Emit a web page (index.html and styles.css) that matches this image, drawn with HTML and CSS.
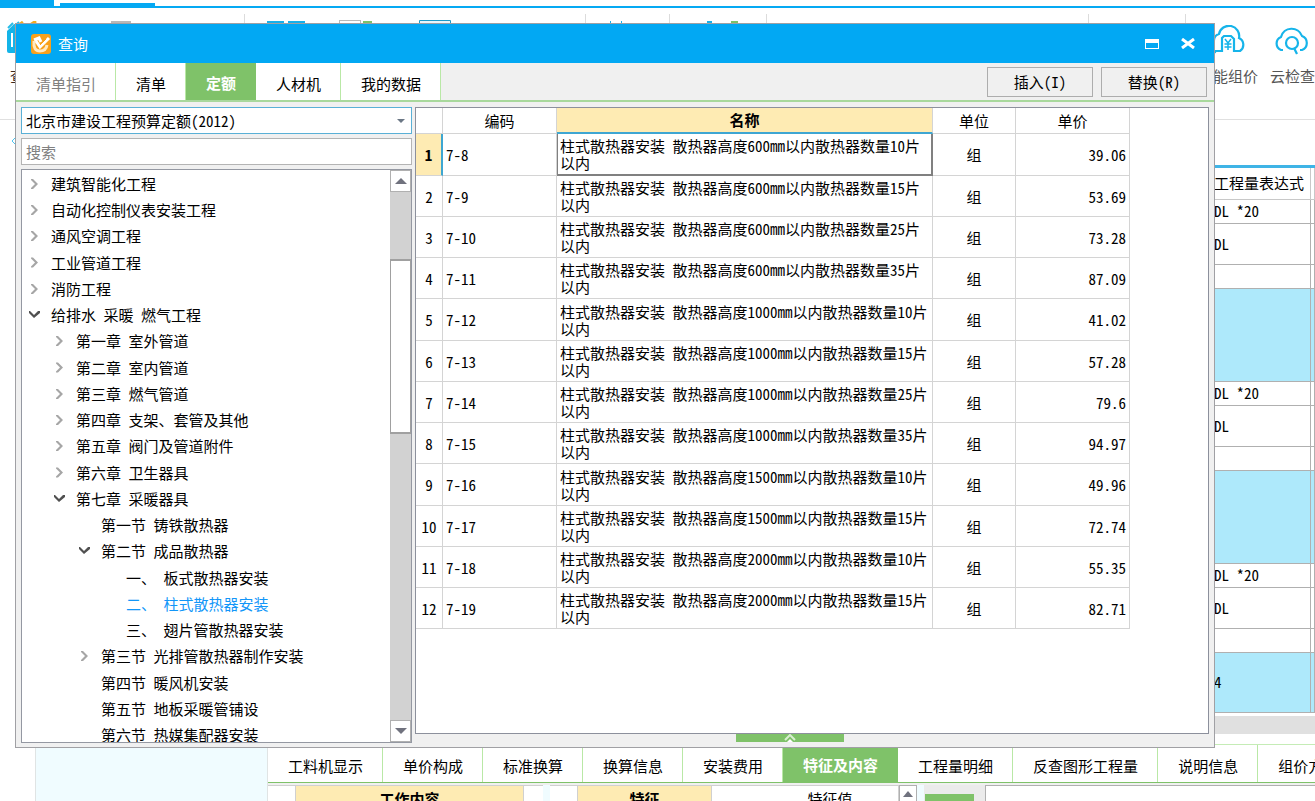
FILE: index.html
```html
<!DOCTYPE html>
<html lang="zh-CN">
<head>
<meta charset="utf-8">
<title>查询</title>
<link rel="stylesheet" href="styles.css">
</head>
<body>
<div class="app">
  <div class="strip"><span class="strip-a"></span><span class="strip-b"></span></div>
  <header class="ribbon">
    <button class="tool tool-first">
      <svg width="36" height="36" viewBox="0 0 36 36"><path d="M2 10 9 3h25v29H4q-2 0-2-2z" fill="#14b4e8"/><path d="M1 9 9 1l3 3" fill="none" stroke="#fff" stroke-width="2"/><path d="M3 7 8 2M9 6l5-5" stroke="#27bce8" stroke-width="2"/><path d="M14 4l4-3M25 4l6-4" stroke="#f3ab1e" stroke-width="3"/><path d="M7 12v14" stroke="#fff" stroke-width="2"/></svg>
      <span>查询</span>
    </button>
    <svg class="ribbon-art" width="1150" height="20" viewBox="0 0 1150 20"><g fill="#dcdcdc"><path d="M204 6h1v14h-1zM545 6h1v14h-1zM629 6h1v14h-1zM726 6h1v14h-1zM1048 6h1v14h-1zM1145 6h1v14h-1z"/></g><path d="M71 13h20v7H71zM299 12h22v8h-22z" fill="#b9b9b9"/><path d="M300 13h20v7h-20z" fill="#fff"/><path d="M227 13h17v7h-17zM248 13h17v7h-17zM570 13h1v7h-1zM581 13h1v7h-1zM667 13h5v7h-5z" fill="#16b0ea"/><path d="M323 13h9v7h-9zM691 13h7v7h-7z" fill="#7fc269"/><path d="M379.500 12.500h31v7h-31z" fill="#e8f6fc" stroke="#1c9ac8"/></svg>
    <div class="cloud-tools">
      <button class="tool">
        <svg width="38" height="32" viewBox="0 0 38 32" fill="none" stroke="#16b4ea" stroke-width="2.200"><path d="M7 27a6 6 0 0 1-2-12 7 7 0 0 1 5-6 10 10 0 0 1 20 4 7.500 7.500 0 0 1 1 13h-6V14l-3-3h-7l-2 2v13H6"/><path d="M16 14l3 4 3-4M19 18v7M15.500 19h7M15.500 22h7" stroke-width="1.500"/></svg>
        <span>智能组价</span>
      </button>
      <button class="tool">
        <svg width="40" height="32" viewBox="0 0 40 32" fill="none" stroke="#16b4ea" stroke-width="2.200"><path d="M11 25H9a7 7 0 0 1 0-13A11 11 0 0 1 30 11a7.500 7.500 0 0 1 0 14h-2"/><circle cx="20" cy="18" r="6"/><path d="M22 23l3 6"/></svg>
        <span>云检查</span>
      </button>
    </div>
  </header>
  <div class="subbar"><svg width="8" height="12" viewBox="0 0 8 12"><path d="M6 2 2 6l4 4" fill="none" stroke="#4cc4f0"/></svg></div>
  <div class="sheet-wrap">
    <table class="sheet">
      <colgroup><col><col class="c-expr"><col class="c-rest"></colgroup>
      <thead><tr><th></th><th>工程量表达式</th><th></th></tr></thead>
      <tbody>
        <tr class="short"><td></td><td>DL *20</td><td></td></tr>
        <tr class="mid"><td></td><td>DL</td><td></td></tr>
        <tr class="short"><td></td><td></td><td></td></tr>
        <tr class="tall"><td></td><td></td><td></td></tr>
        <tr class="short"><td></td><td>DL *20</td><td></td></tr>
        <tr class="mid"><td></td><td>DL</td><td></td></tr>
        <tr class="short"><td></td><td></td><td></td></tr>
        <tr class="tall"><td></td><td></td><td></td></tr>
        <tr class="short"><td></td><td>DL *20</td><td></td></tr>
        <tr class="mid"><td></td><td>DL</td><td></td></tr>
        <tr class="short"><td></td><td></td><td></td></tr>
        <tr class="last"><td></td><td>4</td><td></td></tr>
      </tbody>
    </table>
  </div>
  <div class="hscroll"></div>
  <div class="lower">
    <div class="lower-side"></div>
    <div class="lower-main">
      <nav class="tabs lower-tabs">
        <button>工料机显示</button><button>单价构成</button><button>标准换算</button><button>换算信息</button><button>安装费用</button><button class="on">特征及内容</button><button>工程量明细</button><button>反查图形工程量</button><button>说明信息</button><button>组价方案</button>
      </nav>
      <div class="heads">
        <div class="head head-no"></div>
        <div class="head head-work hl">工作内容</div>
        <div class="head head-fill"></div>
        <div class="gap"></div>
        <div class="head head-no"></div>
        <div class="head head-feat hl">特征</div>
        <div class="head head-val">特征值</div>
        <button class="arrow"><svg width="10" height="6"><path d="M0 6 5 0l5 6z"/></svg></button>
        <div class="gap"></div>
        <div class="side-btns"><button></button></div>
        <div class="note"></div>
      </div>
    </div>
  </div>
</div>

<section class="dialog" role="dialog">
  <div class="title">
    <svg width="20" height="20" viewBox="0 0 20 20"><rect width="20" height="20" rx="3" fill="#f9a11b"/><path d="M3 7q-1 10 6 10 6 0 7-6" fill="none" stroke="#ffe9c0" stroke-width="3"/><path d="M3 6l5-2 2 4M5 7l4 6 9-9" fill="none" stroke="#fff" stroke-width="3"/><path d="M9 11l6-6" stroke="#f9a11b"/></svg>
    <h1>查询</h1>
    <button class="win"><svg width="14" height="10"><path d="M0 0h14v10H0zM1 4v5h12V4z" fill="#fff" fill-rule="evenodd"/></svg></button>
    <button class="win"><svg width="14" height="11"><path d="M1 1l12 9M13 1 1 10" stroke="#fff" stroke-width="3"/></svg></button>
  </div>
  <div class="toolbar">
    <nav class="tabs">
      <button class="dim">清单指引</button><button>清单</button><button class="on">定额</button><button>人材机</button><button>我的数据</button>
    </nav>
    <div class="actions"><button>插入(I)</button><button>替换(R)</button></div>
  </div>
  <div class="body">
    <div class="left">
      <div class="combo">
        <select aria-label="定额库"><option>北京市建设工程预算定额(2012)</option></select>
        <svg width="8" height="4"><path d="M0 0h8L4 4z" fill="#6b7785"/></svg>
      </div>
      <input class="search" type="text" placeholder="搜索" aria-label="搜索">
      <div class="tree-box">
        <div class="tree">
          <button class="node shut">建筑智能化工程</button>
          <button class="node shut">自动化控制仪表安装工程</button>
          <button class="node shut">通风空调工程</button>
          <button class="node shut">工业管道工程</button>
          <button class="node shut">消防工程</button>
          <button class="node open">给排水 采暖 燃气工程</button>
          <button class="node l1 shut">第一章 室外管道</button>
          <button class="node l1 shut">第二章 室内管道</button>
          <button class="node l1 shut">第三章 燃气管道</button>
          <button class="node l1 shut">第四章 支架、套管及其他</button>
          <button class="node l1 shut">第五章 阀门及管道附件</button>
          <button class="node l1 shut">第六章 卫生器具</button>
          <button class="node l1 open">第七章 采暖器具</button>
          <button class="node l2">第一节 铸铁散热器</button>
          <button class="node l2 open">第二节 成品散热器</button>
          <button class="node l3">一、 板式散热器安装</button>
          <button class="node l3 picked">二、 柱式散热器安装</button>
          <button class="node l3">三、 翅片管散热器安装</button>
          <button class="node l2 shut">第三节 光排管散热器制作安装</button>
          <button class="node l2">第四节 暖风机安装</button>
          <button class="node l2">第五节 地板采暖管铺设</button>
          <button class="node l2">第六节 热媒集配器安装</button>
        </div>
        <div class="vscroll">
          <button class="arrow"><svg width="12" height="6"><path d="M0 6 6 0l6 6z"/></svg></button>
          <div class="track"><div class="thumb"></div></div>
          <button class="arrow"><svg width="12" height="6"><path d="M0 0h12L6 6z"/></svg></button>
        </div>
      </div>
    </div>
    <div class="right">
      <div class="grid-box">
        <table class="grid">
          <colgroup><col class="g-no"><col class="g-code"><col class="g-name"><col class="g-unit"><col class="g-price"></colgroup>
          <thead><tr><th></th><th>编码</th><th class="hl">名称</th><th>单位</th><th>单价</th></tr></thead>
          <tbody>
            <tr class="cur"><td>1</td><td>7-8</td><td>柱式散热器安装 散热器高度600mm以内散热器数量10片以内</td><td>组</td><td>39.06</td></tr>
            <tr><td>2</td><td>7-9</td><td>柱式散热器安装 散热器高度600mm以内散热器数量15片以内</td><td>组</td><td>53.69</td></tr>
            <tr><td>3</td><td>7-10</td><td>柱式散热器安装 散热器高度600mm以内散热器数量25片以内</td><td>组</td><td>73.28</td></tr>
            <tr><td>4</td><td>7-11</td><td>柱式散热器安装 散热器高度600mm以内散热器数量35片以内</td><td>组</td><td>87.09</td></tr>
            <tr><td>5</td><td>7-12</td><td>柱式散热器安装 散热器高度1000mm以内散热器数量10片以内</td><td>组</td><td>41.02</td></tr>
            <tr><td>6</td><td>7-13</td><td>柱式散热器安装 散热器高度1000mm以内散热器数量15片以内</td><td>组</td><td>57.28</td></tr>
            <tr><td>7</td><td>7-14</td><td>柱式散热器安装 散热器高度1000mm以内散热器数量25片以内</td><td>组</td><td>79.6</td></tr>
            <tr><td>8</td><td>7-15</td><td>柱式散热器安装 散热器高度1000mm以内散热器数量35片以内</td><td>组</td><td>94.97</td></tr>
            <tr><td>9</td><td>7-16</td><td>柱式散热器安装 散热器高度1500mm以内散热器数量10片以内</td><td>组</td><td>49.96</td></tr>
            <tr><td>10</td><td>7-17</td><td>柱式散热器安装 散热器高度1500mm以内散热器数量15片以内</td><td>组</td><td>72.74</td></tr>
            <tr><td>11</td><td>7-18</td><td>柱式散热器安装 散热器高度2000mm以内散热器数量10片以内</td><td>组</td><td>55.35</td></tr>
            <tr><td>12</td><td>7-19</td><td>柱式散热器安装 散热器高度2000mm以内散热器数量15片以内</td><td>组</td><td>82.71</td></tr>
          </tbody>
        </table>
      </div>
      <div class="foot"><button class="expand"><svg width="12" height="8"><path d="M1 6l5-5 5 5" fill="none" stroke="#d9efd2" stroke-width="2"/><path d="M3 8l3-3 3 3z" fill="#fff"/></svg></button></div>
    </div>
  </div>
</section>
</body>
</html>
```
FILE: styles.css
```css
* { box-sizing: border-box; }
body, button, input, select, table {
  font-family: "Noto Sans CJK SC", sans-serif;
  font-size: 15px;
  line-height: 18px;
  font-feature-settings: "hwid";
  color: #000;
}
body { margin: 0; background: #fff; overflow: hidden; }
button { border: 0; padding: 0; background: none; white-space: nowrap; }
svg { display: block; flex: none; }

.app { height: 100vh; display: flex; flex-direction: column; overflow: hidden; }
.strip { display: flex; align-items: flex-end; gap: 6px; height: 8px; flex: none; border-bottom: 2px solid #05a9f3; }
.strip-a { width: 54px; height: 6px; background: #05a9f3; }
.strip-b { width: 95px; height: 3px; background: #05a9f3; }

.ribbon { display: flex; height: 112px; flex: none; border-bottom: 1px solid #e0e0e0; overflow: hidden; }
.tool { display: flex; flex-direction: column; align-items: center; gap: 10px; color: #555; flex: none; }
.tool-first { width: 40px; padding: 13px 0 0 5px; align-self: flex-start; color: #3c2a20; }
.tool-first span { padding-left: 5px; }
.ribbon-art { flex: none; margin-right: -1150px; }
.cloud-tools { display: flex; gap: 12px; align-items: flex-start; margin-left: auto; padding-top: 17px; }

.subbar { height: 45px; flex: none; padding: 15px 0 0 10px; }
.sheet-wrap { flex: 1; margin-left: 35px; overflow: hidden; border-top: 3px solid #3fb4e6; }
.sheet { width: 100%; table-layout: fixed; border-collapse: collapse; }
.c-expr { width: 97px; }
.c-rest { width: 4px; }
.sheet th { height: 31px; font-weight: 400; text-align: left; border-right: 1px solid #c8c8c8; border-bottom: 1px solid #c8c8c8; padding: 0; white-space: nowrap; }
.sheet td { border-right: 1px solid #b0b0b0; border-bottom: 1px solid #b0b0b0; padding: 0; }
.short td { height: 24px; }
.mid td { height: 41px; }
.tall td { height: 93px; background: #aee9fb; }
.last td { height: 60px; background: #aee9fb; }
.hscroll { height: 18px; margin-left: 35px; flex: none; background: #e0e0e0; }

.lower { display: flex; height: 67px; flex: none; padding-top: 10px; }
.lower-side { width: 233px; margin-left: 35px; flex: none; background: #f0fcff; border: 1px solid #e0e4e4; border-width: 0 1px; }
.lower-main { flex: 1; min-width: 0; overflow: hidden; }
.tabs { display: flex; }
.tabs button { padding: 4px 19px 0 20px; background: #fff; border-right: 1px solid #b9e8a6; flex: none; }
.tabs .on { background: #7fc269; color: #fff; font-weight: 700; border-color: #7fc269; padding-top: 2px; }
.tabs .dim { color: #808080; }
.lower-tabs { height: 39px; border-top: 1px solid #c5ecb6; border-bottom: 1px solid #7fc269; }
.heads { display: flex; height: 30px; padding-top: 2px; background: #f0f0f0; }
.head { background: #fff; border: 1px solid #d0d0d0; border-width: 1px 1px 0 0; text-align: center; padding-top: 4px; flex: none; }
.hl { background: #feebb3; font-weight: 700; }
.head-no { width: 28px; }
.head-work { width: 228px; }
.head-fill { width: 19px; border-right: 0; }
.head-feat { width: 134px; }
.head-val { width: 187px; padding-left: 50px; }
.gap { width: 7px; background: #f0fcff; flex: none; }
.side-btns { width: 61px; padding: 9px 11px 0 1px; background: #ebebeb; flex: none; }
.side-btns button { display: block; width: 100%; height: 20px; background: #7fc269; }
.note { flex: 1; background: #fff; border: 1px solid #b0b0b0; border-width: 1px 0 0 1px; }
.arrow { display: flex; align-items: center; justify-content: center; width: 18px; height: 17px; background: #fff; border: 1px solid #b0b0b0; flex: none; }
.arrow svg { fill: #70727e; }

.dialog { position: absolute; inset: 23px 100px 53px 15px; display: flex; flex-direction: column; background: #f0f0f0; border: 1px solid #a0a0a4; }
.title { display: flex; align-items: center; height: 39px; flex: none; padding: 0 19px 0 15px; background: #02a8f3; }
.title h1 { flex: 1; margin: 0 0 0 7px; font-size: 15px; font-weight: 400; color: #fff; }
.win { margin-left: 22px; }
.toolbar { display: flex; justify-content: space-between; height: 39px; flex: none; border-bottom: 2px solid #a8d89c; }
.actions { display: flex; gap: 8px; padding: 4px 7px 3px 0; }
.actions button { width: 106px; border: 1px solid #adadad; background: #f0f0f0; }

.body { flex: 1; min-height: 0; display: flex; gap: 3px; padding: 5px 5px 4px 5px; }
.left { width: 391px; flex: none; display: flex; flex-direction: column; gap: 4px; }
.combo { display: flex; align-items: center; height: 27px; flex: none; background: #fff; border: 1px solid #5ab0d6; padding-right: 6px; }
.combo select { flex: 1; height: 25px; border: 0; padding: 0 0 0 4px; background: none; appearance: none; }
.search { height: 27px; flex: none; border: 1px solid #b4b4b4; padding: 0 4px; background: #fff; }
.search::placeholder { color: #808080; }
.tree-box { flex: 1; min-height: 0; display: flex; background: #fff; border: 1px solid #9498a2; }
.tree { flex: 1; overflow: hidden; padding-top: 1px; }
.node { display: flex; align-items: center; width: 100%; height: 26px; padding-left: 4px; }
.node:nth-child(4n) { height: 27px; }
.node::before { content: ""; width: 16px; height: 12px; margin-right: 9px; flex: none; }
.node.shut::before { background: #a6a6a6; clip-path: polygon(5px 1px, 7px 1px, 12px 6px, 7px 11px, 5px 11px, 5px 10px, 9px 6px, 5px 2px); }
.node.open::before { background: #505050; clip-path: polygon(3px 2px, 4px 2px, 8px 6px, 12px 2px, 14px 2px, 14px 4px, 8px 9px, 3px 4px); }
.l1 { padding-left: 29px; }
.l2 { padding-left: 54px; }
.l3 { padding-left: 79px; }
.picked { color: #1296f8; }
.vscroll { width: 21px; display: flex; flex-direction: column; flex: none; background: #d2d2d2; }
.vscroll .arrow { width: 21px; height: 22px; }
.track { flex: 1; padding-top: 67px; }
.thumb { height: 38%; background: #fff; border: 1px solid #a0a0a0; border-width: 2px 1px; }

.right { flex: 1; min-width: 0; display: flex; flex-direction: column; }
.grid-box { flex: 1; min-height: 0; overflow: hidden; background: #fff; border: 1px solid #8c909c; }
.grid { table-layout: fixed; width: 714px; border-collapse: separate; border-spacing: 0; }
.g-no { width: 27px; }
.g-code { width: 114px; }
.g-name { width: 376px; }
.g-unit { width: 83px; }
.g-price { width: 114px; }
.grid th { height: 26px; padding: 0; font-weight: 400; border: 1px solid #d4d4d4; border-width: 0 1px 1px 0; }
.grid th.hl { font-weight: 700; border-bottom: 2px solid #3ea6d2; }
.grid td { height: 41px; padding: 0 3px; border: 1px solid #d4d4d4; border-width: 0 1px 1px 0; line-height: 17px; }
.grid tbody tr:nth-child(4n+1) td { height: 42px; }
.grid td:nth-child(1), .grid td:nth-child(4) { text-align: center; padding: 0; }
.grid td:nth-child(5) { text-align: right; }
.grid .cur td:nth-child(1) { background: #feebb3; font-weight: 700; border-right: 2px solid #3ea6d2; }
.grid .cur td:nth-child(3) { border: 1px solid #808080; border-width: 0 2px 2px 1px; padding: 0 1px 0 2px; }
.foot { height: 9px; flex: none; padding-right: 44px; display: flex; justify-content: center; }
.expand { display: flex; justify-content: center; width: 108px; height: 8px; background: #7fc269; }
```
